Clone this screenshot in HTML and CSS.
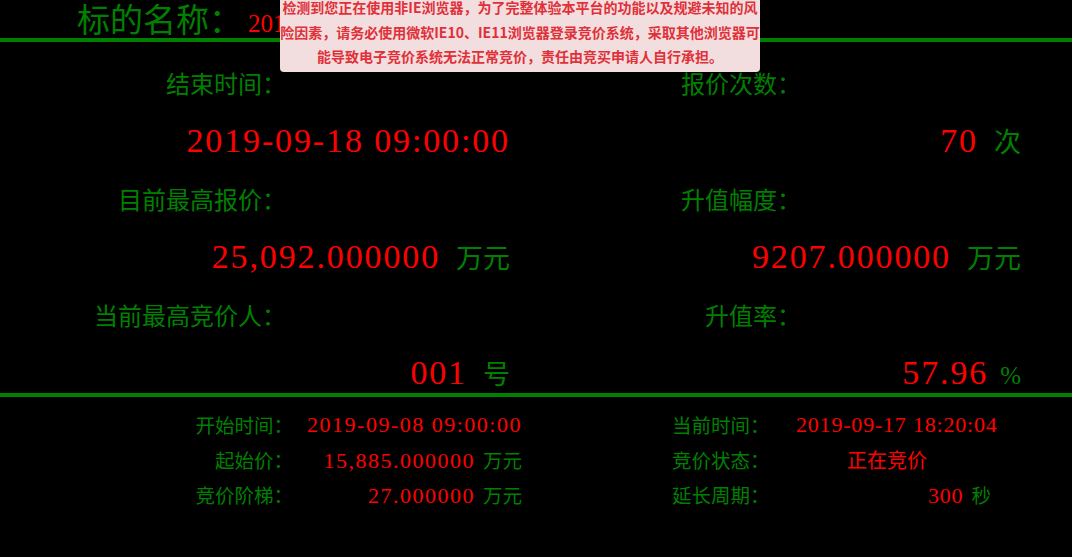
FILE: index.html
```html
<!DOCTYPE html>
<html lang="zh-CN">
<head>
<meta charset="utf-8">
<title>竞价大厅</title>
<link rel="stylesheet" href="styles.css">
</head>
<body>
<div class="page">
  <header class="header">
    <span class="title">标的名称：</span><span class="title-value">2019</span>
  </header>
  <div class="rule"></div>

  <section class="main">
    <div class="col col-left">
      <div class="label">结束时间：</div>
      <div class="value"><span class="num">2019-09-18 09:00:00</span></div>
      <div class="label">目前最高报价：</div>
      <div class="value"><span class="num">25,092.000000</span><span class="unit">万元</span></div>
      <div class="label">当前最高竞价人：</div>
      <div class="value"><span class="num">001</span><span class="unit">号</span></div>
    </div>
    <div class="col col-right">
      <div class="label">报价次数：</div>
      <div class="value"><span class="num">70</span><span class="unit">次</span></div>
      <div class="label">升值幅度：</div>
      <div class="value"><span class="num">9207.000000</span><span class="unit">万元</span></div>
      <div class="label">升值率：</div>
      <div class="value"><span class="num">57.96</span><span class="unit unit-pct">%</span></div>
    </div>
  </section>
  <div class="rule"></div>

  <section class="info">
    <div class="info-col info-left">
      <div class="i-label">开始时间：</div>
      <div class="i-value"><span class="i-num">2019-09-08 09:00:00</span></div>
      <div class="i-label">起始价：</div>
      <div class="i-value"><span class="i-num">15,885.000000</span><span class="i-unit">万元</span></div>
      <div class="i-label">竞价阶梯：</div>
      <div class="i-value"><span class="i-num">27.000000</span><span class="i-unit">万元</span></div>
    </div>
    <div class="info-col info-right">
      <div class="i-label">当前时间：</div>
      <div class="i-value v-time"><span class="i-num">2019-09-17 18:20:04</span></div>
      <div class="i-label">竞价状态：</div>
      <div class="i-value v-status"><span class="i-text">正在竞价</span></div>
      <div class="i-label">延长周期：</div>
      <div class="i-value v-ext"><span class="i-num">300</span><span class="i-unit">秒</span></div>
    </div>
  </section>

  <div class="alert">检测到您正在使用非IE浏览器，为了完整体验本平台的功能以及规避未知的风<br>险因素，请务必使用微软IE10、IE11浏览器登录竞价系统，采取其他浏览器可<br>能导致电子竞价系统无法正常竞价，责任由竞买申请人自行承担。</div>
</div>
</body>
</html>
```

FILE: styles.css
```css
html, body {
  margin: 0;
  padding: 0;
  background: #000;
}

.page {
  position: relative;
  width: 1072px;
  height: 557px;
  overflow: hidden;
  background: #000;
  font-family: "Noto Sans CJK SC", "Noto Sans", sans-serif;
  color: #008000;
}

.header {
  height: 38px;
  line-height: 36px;
  padding-left: 77px;
  overflow: hidden;
  white-space: nowrap;
}

.title {
  font-size: 33px;
  color: #008000;
}

.title-value {
  margin-left: 6px;
  font-family: "Liberation Serif", serif;
  font-size: 25px;
  color: #ff0000;
}

.rule {
  height: 4px;
  background: #008000;
}

/* main figures */
.main {
  display: flex;
  height: 351px;
  box-sizing: border-box;
  padding-top: 12px;
}

.col {
  display: flex;
  flex-direction: column;
}

.col-left { width: 510px; }
.col-right { width: 511px; }

.label {
  height: 58px;
  line-height: 58px;
  font-size: 24px;
  text-align: right;
  white-space: nowrap;
  color: #008000;
}

.col-left .label { padding-right: 224px; }
.col-right .label { padding-right: 220px; }

.value {
  height: 58px;
  line-height: 58px;
  text-align: right;
  white-space: nowrap;
}

.num {
  font-family: "Liberation Serif", "Noto Sans CJK SC", serif;
  font-size: 34px;
  letter-spacing: 0.055em;
  color: #ff0000;
}

.unit {
  margin-left: 16px;
  font-size: 27px;
  color: #008000;
}

.unit-pct {
  font-family: "Liberation Serif", serif;
  font-size: 25px;
  margin-left: 12px;
}

/* bottom info */
.info {
  display: flex;
  padding-top: 10px;
}

.info-col {
  display: grid;
  grid-auto-rows: 35px;
  line-height: 35px;
  white-space: nowrap;
}

.info-left {
  grid-template-columns: 293px 229px;
}

.info-left .i-label { text-align: right; }
.info-left .i-value { text-align: right; }

.info-right {
  margin-left: 150px;
  grid-template-columns: 124px 260px;
}

.i-label {
  font-size: 19.5px;
  color: #008000;
}

.i-num {
  font-family: "Liberation Serif", "Noto Sans CJK SC", serif;
  font-size: 22px;
  letter-spacing: 1.5px;
  color: #ff0000;
}

.info-right .i-num { letter-spacing: 0.8px; }

.i-text {
  font-size: 20px;
  color: #ff0000;
}

.i-unit {
  margin-left: 8px;
  font-size: 19.5px;
  color: #008000;
}

.v-status { padding-left: 51px; }
.v-ext { padding-left: 132px; }

/* warning overlay */
.alert {
  position: absolute;
  top: -5px;
  left: 280px;
  width: 480px;
  height: 77px;
  box-sizing: border-box;
  padding: 0;
  background: #f2dede;
  border-radius: 0 0 4px 4px;
  color: #e0303a;
  font-size: 14px;
  font-weight: 700;
  line-height: 24.5px;
  text-align: center;
  white-space: nowrap;
}
```
